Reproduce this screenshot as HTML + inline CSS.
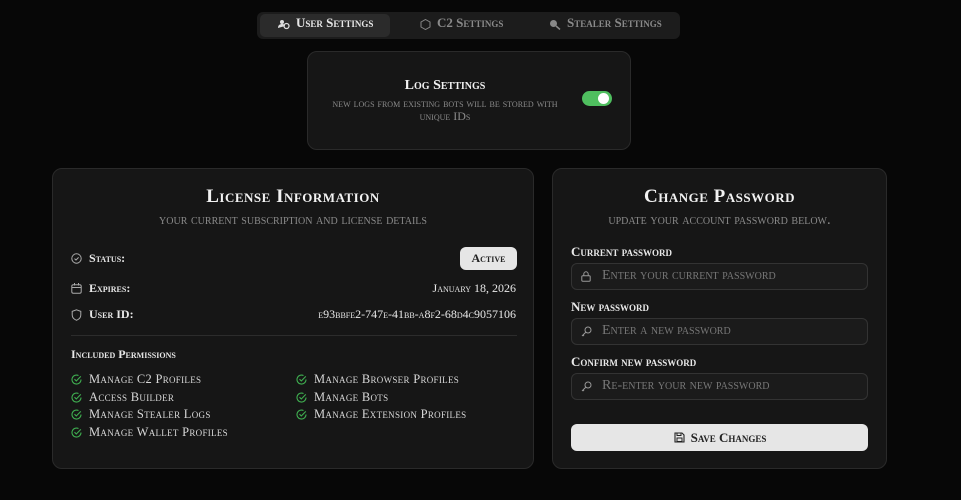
<!DOCTYPE html>
<html><head><style>
*{box-sizing:border-box;margin:0;padding:0}
body{width:961px;height:500px;background:#070707;font-family:"Liberation Serif",serif;color:#e8e8e8;position:relative;overflow:hidden;font-variant:small-caps}
.a{position:absolute}
.card{position:absolute;background:#161616;border:1px solid #2a2a2a;border-radius:10px}
.c{text-align:center}
.g{color:#8a8a8a}
svg{position:absolute}
.perm{position:absolute;font-size:12.5px;color:#d8d8d8;letter-spacing:.3px}
.inp{position:absolute;left:18px;width:297px;height:27px;background:#1b1b1b;border:1px solid #333;border-radius:6px;font-size:14px;color:#777;padding-left:30px;line-height:24px}
.lbl{position:absolute;left:18px;font-size:13px;font-weight:bold;color:#e8e8e8}
</style></head><body>
<div class="a" style="left:257px;top:12px;width:423px;height:27px;background:#1c1c1c;border-radius:6px"></div>
<div class="a" style="left:260px;top:14px;width:130px;height:23px;background:#2b2b2b;border-radius:5px"></div>
<svg style="left:278px;top:19px" width="12" height="11" viewBox="0 0 12 11"><circle cx="4" cy="3" r="2" fill="#ddd"/><circle cx="8.5" cy="7" r="2.5" fill="none" stroke="#ddd" stroke-width="1.3"/><path d="M0 9c0-3 2-4 4-4s3 1 3 2" fill="#ddd"/></svg>
<div class="a" style="left:296px;top:15px;font-size:13px;font-weight:bold;color:#e8e8e8">User Settings</div>
<svg style="left:420px;top:19px" width="11" height="11" viewBox="0 0 11 11"><polygon points="5.5,0.5 10,3 10,8 5.5,10.5 1,8 1,3" fill="none" stroke="#888" stroke-width="1"/></svg>
<div class="a g" style="left:437px;top:15px;font-size:13px;font-weight:bold">C2 Settings</div>
<svg style="left:549px;top:19px" width="12" height="11" viewBox="0 0 12 11"><circle cx="4.5" cy="4.5" r="3.5" fill="#888"/><path d="M7 7l4 3.5" stroke="#888" stroke-width="1.5"/></svg>
<div class="a g" style="left:567px;top:15px;font-size:13px;font-weight:bold">Stealer Settings</div>

<div class="card" style="left:307px;top:51px;width:324px;height:99px"></div>
<div class="a c" style="left:320px;top:78px;width:250px;font-size:14px;font-weight:bold;color:#f2f2f2">Log Settings</div>
<div class="a c g" style="left:326px;top:97px;width:238px;font-size:12px;line-height:13px">new logs from existing bots will be stored with unique IDs</div>
<div class="a" style="left:582px;top:91px;width:30px;height:15px;background:#4fbf5f;border-radius:8px"><div class="a" style="left:16px;top:2px;width:11px;height:11px;background:#fff;border-radius:50%"></div></div>

<div class="card" style="left:52px;top:168px;width:482px;height:301px">
<div class="a c" style="left:0;top:17px;width:480px;font-size:19px;font-weight:bold;color:#f2f2f2;letter-spacing:.5px">License Information</div>
<div class="a c g" style="left:0;top:43px;width:480px;font-size:14.5px">your current subscription and license details</div>
<svg style="left:18px;top:84px" width="11" height="11" viewBox="0 0 11 11"><circle cx="5.5" cy="5.5" r="4.7" fill="none" stroke="#aaa"/><path d="M3.5 5.6l1.5 1.4 2.6-2.6" fill="none" stroke="#aaa"/></svg>
<div class="a" style="left:36px;top:82px;font-size:12px;font-weight:bold">Status:</div>
<div class="a" style="left:407px;top:78px;width:57px;height:23px;background:#e6e6e6;border-radius:6px;color:#222;font-size:12px;font-weight:bold;text-align:center;line-height:22px">Active</div>
<svg style="left:18px;top:114px" width="11" height="11" viewBox="0 0 11 11"><rect x="0.8" y="1.8" width="9.4" height="8.4" rx="1.5" fill="none" stroke="#aaa"/><path d="M1 4.5h9M3.5 0v2.5M7.5 0v2.5" stroke="#aaa"/></svg>
<div class="a" style="left:36px;top:112px;font-size:12px;font-weight:bold">Expires:</div>
<div class="a" style="right:17px;top:112px;font-size:12px">January 18, 2026</div>
<svg style="left:18px;top:140px" width="11" height="12" viewBox="0 0 11 12"><path d="M5.5 0.8l4.3 1.6v3.5c0 2.8-2 4.5-4.3 5.4C3.2 10.4 1.2 8.7 1.2 5.9V2.4z" fill="none" stroke="#aaa"/></svg>
<div class="a" style="left:36px;top:138px;font-size:12px;font-weight:bold">User ID:</div>
<div class="a" style="right:17px;top:138px;font-size:12px">e93bbfe2-747e-41bb-a8f2-68d4c9057106</div>
<div class="a" style="left:18px;top:166px;width:446px;height:1px;background:#2c2c2c"></div>
<div class="a" style="left:18px;top:178px;font-size:12px;font-weight:bold">Included Permissions</div>
<div id="perms"></div>
</div>

<div class="card" style="left:552px;top:168px;width:335px;height:301px">
<div class="a c" style="left:0;top:17px;width:333px;font-size:19px;font-weight:bold;color:#f2f2f2;letter-spacing:.5px">Change Password</div>
<div class="a c g" style="left:0;top:43px;width:333px;font-size:14.5px">update your account password below.</div>
<div class="lbl" style="top:75px">Current password</div>
<div class="inp" style="top:94px">Enter your current password</div>
<div class="lbl" style="top:130px">New password</div>
<div class="inp" style="top:149px">Enter a new password</div>
<div class="lbl" style="top:185px">Confirm new password</div>
<div class="inp" style="top:204px">Re-enter your new password</div>
<svg style="left:28px;top:102px" width="10" height="11" viewBox="0 0 10 11"><rect x="0.8" y="4.8" width="8.4" height="5.4" rx="1" fill="none" stroke="#999"/><path d="M2.8 4.8V3a2.2 2.2 0 0 1 4.4 0v1.8" fill="none" stroke="#999"/></svg>
<svg style="left:28px;top:157px" width="11" height="11" viewBox="0 0 11 11"><circle cx="7" cy="4" r="3" fill="none" stroke="#999"/><path d="M5 6L1 10M2 9l1 1" stroke="#999" fill="none"/></svg>
<svg style="left:28px;top:212px" width="11" height="11" viewBox="0 0 11 11"><circle cx="7" cy="4" r="3" fill="none" stroke="#999"/><path d="M5 6L1 10M2 9l1 1" stroke="#999" fill="none"/></svg>
<div class="a" style="left:18px;top:255px;width:297px;height:27px;background:#e6e6e6;border-radius:6px;color:#222;font-size:13px;font-weight:bold;text-align:center;line-height:27px;padding-left:18px">Save Changes</div>
<svg style="left:121px;top:263px" width="11" height="11" viewBox="0 0 11 11"><path d="M1 1h7l2 2v7H1z" fill="none" stroke="#222" stroke-width="1.1"/><rect x="3" y="6" width="5" height="3.5" fill="none" stroke="#222"/><path d="M3 1v2.5h4V1" fill="none" stroke="#222"/></svg>
</div>
<script>
var p=[[18,203,"Manage C2 Profiles"],[18,221,"Access Builder"],[18,238,"Manage Stealer Logs"],[18,256,"Manage Wallet Profiles"],[243,203,"Manage Browser Profiles"],[243,221,"Manage Bots"],[243,238,"Manage Extension Profiles"]];
var h="";p.forEach(function(a){h+='<svg style="left:'+a[0]+'px;top:'+(a[1]+2)+'px" width="11" height="11" viewBox="0 0 11 11"><path d="M10 5.5A4.5 4.5 0 1 1 7.5 1.5" fill="none" stroke="#3fae50" stroke-width="1.1"/><path d="M3.5 5.2l1.8 1.8 4.5-4.6" fill="none" stroke="#3fae50" stroke-width="1.1"/></svg><div class="perm" style="left:'+(a[0]+18)+'px;top:'+a[1]+'px">'+a[2]+'</div>';});
document.getElementById("perms").innerHTML=h;
</script>
</body></html>
